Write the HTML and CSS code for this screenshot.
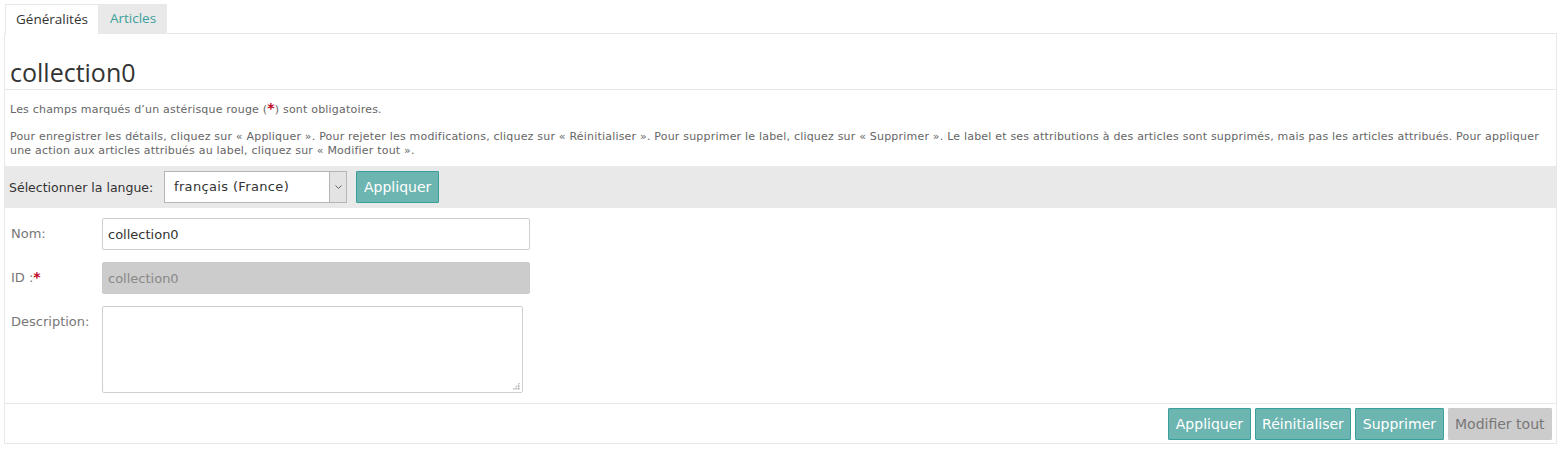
FILE: index.html
```html
<!DOCTYPE html>
<html lang="fr">
<head>
    <meta charset="UTF-8">
    <title>collection0</title>
    <link rel="stylesheet" href="styles.css">
</head>
<body>
    <div class="tabs">
        <div class="tab active">Généralités</div>
        <div class="tab">Articles</div>
    </div>
    <div class="panel">
        <h1 class="title">collection0</h1>
        <div class="help">
            <p>Les champs marqués d’un astérisque rouge (<span class="req">*</span>) sont obligatoires.</p>
            <p>Pour enregistrer les détails, cliquez sur « Appliquer ». Pour rejeter les modifications, cliquez sur « Réinitialiser ». Pour supprimer le label, cliquez sur « Supprimer ». Le label et ses attributions à des articles sont supprimés, mais pas les articles attribués. Pour appliquer une action aux articles attribués au label, cliquez sur « Modifier tout ».</p>
        </div>
        <div class="lang-bar">
            <label for="lang">Sélectionner la langue:</label>
            <div class="select">
                <span class="select-value">français (France)</span>
                <span class="select-arrow">
                    <svg width="9" height="6" viewBox="0 0 9 6"><path d="M1.5 1.5 L4.5 4.5 L7.5 1.5" fill="none" stroke="#666" stroke-width="1"/></svg>
                </span>
            </div>
            <button class="btn">Appliquer</button>
        </div>
        <form class="fields">
            <div class="row">
                <label>Nom:</label>
                <input type="text" class="field" value="collection0">
            </div>
            <div class="row">
                <label>ID :<span class="req">*</span></label>
                <input type="text" class="field disabled" value="collection0" readonly>
            </div>
            <div class="row">
                <label>Description:</label>
                <div class="area-wrap">
                    <textarea class="area"></textarea>
                </div>
            </div>
        </form>
        <div class="actions">
            <button class="btn">Appliquer</button>
            <button class="btn">Réinitialiser</button>
            <button class="btn">Supprimer</button>
            <button class="btn off">Modifier tout</button>
        </div>
    </div>
</body>
</html>
```

FILE: styles.css
```css
* {
    box-sizing: border-box;
    margin: 0;
    padding: 0;
}

body {
    font-family: 'DejaVu Sans', Verdana, sans-serif;
    background-color: #fff;
    color: #333;
    padding: 4px 7px 0 4px;
}

.tabs {
    display: flex;
    padding-left: 1px;
}

.tab {
    font-family: 'Open Sans', sans-serif;
    font-size: 13.5px;
    height: 29px;
    line-height: 29px;
    padding: 0 11px;
    background-color: #e9e9e9;
    color: #3a9f9a;
}

.tab.active {
    background-color: #fff;
    color: #333;
    border: 1px solid #e8e8e8;
    border-bottom: none;
    height: 30px;
    margin-bottom: -1px;
    position: relative;
    padding: 0 10px;
}

.panel {
    border: 1px solid #e8e8e8;
}

.title {
    font-family: 'Open Sans', sans-serif;
    font-weight: normal;
    font-size: 25px;
    color: #333;
    padding: 21px 5px 0;
    height: 56px;
    line-height: 34px;
    border-bottom: 1px solid #e8e8e8;
}

.help {
    font-size: 11px;
    line-height: 14px;
    letter-spacing: 0.2px;
    color: #666;
    padding: 13px 3px 8px 5px;
}

.help p + p {
    margin-top: 13px;
}

.req {
    color: #c00020;
    font-weight: bold;
    font-size: 14px;
    line-height: 10px;
}

.lang-bar {
    display: flex;
    align-items: center;
    background-color: #e9e9e9;
    height: 42px;
    padding: 0 4px;
    font-size: 12.5px;
    color: #333;
}

.lang-bar label {
    width: 155px;
}

.select {
    display: flex;
    width: 183px;
    height: 32px;
    background-color: #fff;
    border: 1px solid #b5b5b5;
    margin-right: 9px;
}

.select-value {
    flex: 1;
    line-height: 30px;
    padding-left: 9px;
    font-size: 13px;
    letter-spacing: 0.35px;
}

.select-arrow {
    width: 17px;
    border-left: 1px solid #b5b5b5;
    background-color: #e3e3e3;
    display: flex;
    align-items: center;
    justify-content: center;
}

.btn {
    font-family: 'DejaVu Sans', Verdana, sans-serif;
    font-size: 14px;
    height: 32px;
    padding: 0 7px;
    background-color: #6db5b0;
    color: #fff;
    border: 1px solid #3a9f9a;
    border-radius: 1px;
}

.btn.off {
    background-color: #cccccc;
    border-color: #cccccc;
    color: #777;
}

.fields {
    padding: 10px 0 10px 6px;
    border-bottom: 1px solid #e8e8e8;
}

.row {
    display: flex;
    align-items: flex-start;
    margin-bottom: 12px;
}

.row:last-child {
    margin-bottom: 0;
}

.row label {
    width: 91px;
    font-size: 13px;
    color: #777;
    line-height: 32px;
}

.field {
    width: 428px;
    height: 32px;
    border: 1px solid #cfcfcf;
    border-radius: 2px;
    padding: 0 5px;
    font-family: 'DejaVu Sans', Verdana, sans-serif;
    font-size: 13px;
    color: #333;
}

.field.disabled {
    background-color: #cccccc;
    border-color: #cccccc;
    color: #888;
}

.area-wrap {
    position: relative;
    width: 421px;
    height: 87px;
}

.area {
    display: block;
    width: 100%;
    height: 100%;
    border: 1px solid #cfcfcf;
    border-radius: 2px;
    resize: none;
}

/* resize grip dots */
.area-wrap::after {
    content: "";
    position: absolute;
    right: 3px;
    bottom: 3px;
    width: 8px;
    height: 8px;
    background-image: radial-gradient(circle, #999 0.8px, transparent 1px);
    background-size: 2.7px 2.7px;
    clip-path: polygon(100% 0, 100% 100%, 0 100%);
}

.actions {
    display: flex;
    justify-content: flex-end;
    gap: 4px;
    padding: 4px 4px 3px;
}

.actions .btn {
    padding: 0 6.5px;
}
```
